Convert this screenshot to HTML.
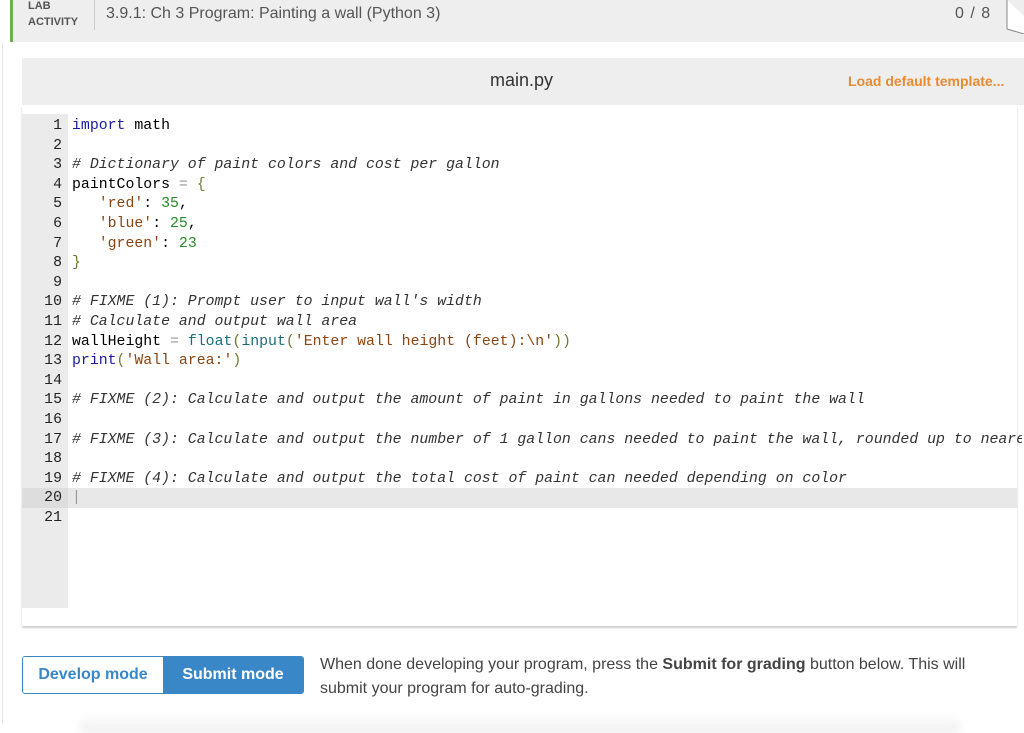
<!DOCTYPE html>
<html><head><meta charset="utf-8"><style>
body{margin:0;width:1024px;height:723px;background:#fff;position:relative;overflow:hidden;font-family:"Liberation Sans",sans-serif}
.top{position:absolute;left:10px;top:0;width:1014px;height:42px;background:#eeeeee;border-left:3px solid #6ab04c;box-sizing:border-box}
.lab{position:absolute;left:15px;top:-2px;font-size:11px;font-weight:bold;color:#555;line-height:16px}
.sep{position:absolute;left:81px;top:0;height:30px;border-left:1px solid #ccc}
.title{position:absolute;left:93px;top:5px;font-size:16px;color:#555}
.score{position:absolute;left:942px;top:5px;font-size:16px;color:#555;letter-spacing:1px}
.hex{position:absolute;left:980px;top:0;width:40px;height:34px}
.vline{position:absolute;left:2px;top:42px;height:681px;border-left:1px solid #e4e4e4}
.hdr{position:absolute;left:22px;top:58px;width:1002px;height:47px;background:#eeeeee}
.fname{position:absolute;left:490px;top:70px;font-size:18px;color:#333}
.load{position:absolute;left:848px;top:73px;font-size:14px;font-weight:bold;color:#e88a2e}
.ed{position:absolute;left:22px;top:105px;width:995px;height:521px;background:#fff;box-shadow:0 2px 2px #ccc}
.gut{position:absolute;left:22px;top:114px;width:46px;height:494px;background:#ebebeb}
.act{position:absolute;left:68px;top:488px;width:949px;height:20px;background:#e8e8e8}
.act2{position:absolute;left:22px;top:488px;width:46px;height:20px;background:#ddd}
pre{margin:0;font-family:"Liberation Mono",monospace;font-size:14.85px;line-height:19.6px;position:absolute;top:117px;color:#000}
.nums{left:22px;width:40px;text-align:right;color:#222}
.code{left:72px;width:950px;overflow:hidden}
.k{color:#1a1aa6}.c{color:#333;font-style:italic}.s{color:#8b4513}.n{color:#2a8a2a}.b{color:#777733}.f{color:#1b6e7a}.o{color:#999}
.btns{position:absolute;left:22px;top:656px;width:282px;height:38px;border:1px solid #3a87c8;border-radius:3px;display:flex;overflow:hidden;box-sizing:border-box}
.btns div{flex:1;text-align:center;line-height:36px;font-size:16px;font-weight:bold}
.dev{color:#3a87c8;background:#fff}.sub{color:#fff;background:#3a87c8}
.msg{position:absolute;left:320px;top:653px;width:690px;font-size:16px;line-height:24px;color:#444}
.shadow{position:absolute;left:80px;top:713px;width:880px;height:20px;background:linear-gradient(#fff,#eee);filter:blur(4px)}
</style></head><body>
<div class="top"><div class="lab">LAB<br>ACTIVITY</div><div class="sep"></div><div class="title">3.9.1: Ch 3 Program: Painting a wall (Python 3)</div><div class="score">0 / 8</div>
<svg class="hex" viewBox="0 0 40 34"><path d="M14 0 V29 L31 34 L45 29" fill="#fff" stroke="#888" stroke-width="1"/></svg></div>
<div class="vline"></div>
<div class="hdr"></div><div class="fname">main.py</div><div class="load">Load default template...</div>
<div class="ed"></div><div class="gut"></div><div class="act"></div><div class="act2"></div>
<pre class="nums">1
2
3
4
5
6
7
8
9
10
11
12
13
14
15
16
17
18
19
20
21</pre>
<pre class="code"><span class="k">import</span> math

<span class="c"># Dictionary of paint colors and cost per gallon</span>
paintColors <span class="o">=</span> <span class="b">{</span>
   <span class="s">'red'</span>: <span class="n">35</span>,
   <span class="s">'blue'</span>: <span class="n">25</span>,
   <span class="s">'green'</span>: <span class="n">23</span>
<span class="b">}</span>

<span class="c"># FIXME (1): Prompt user to input wall's width</span>
<span class="c"># Calculate and output wall area</span>
wallHeight <span class="o">=</span> <span class="f">float</span><span class="b">(</span><span class="f">input</span><span class="b">(</span><span class="s">'Enter wall height (feet):\n'</span><span class="b">))</span>
<span class="k">print</span><span class="b">(</span><span class="s">'Wall area:'</span><span class="b">)</span>

<span class="c"># FIXME (2): Calculate and output the amount of paint in gallons needed to paint the wall</span>

<span class="c"># FIXME (3): Calculate and output the number of 1 gallon cans needed to paint the wall, rounded up to nearest integer</span>

<span class="c"># FIXME (4): Calculate and output the total cost of paint can needed depending on color</span>
<span style="color:#999">|</span>
</pre>
<div class="btns"><div class="dev">Develop mode</div><div class="sub">Submit mode</div></div>
<div class="msg">When done developing your program, press the <b>Submit for grading</b> button below. This will submit your program for auto-grading.</div>
<div class="shadow"></div>
</body></html>
